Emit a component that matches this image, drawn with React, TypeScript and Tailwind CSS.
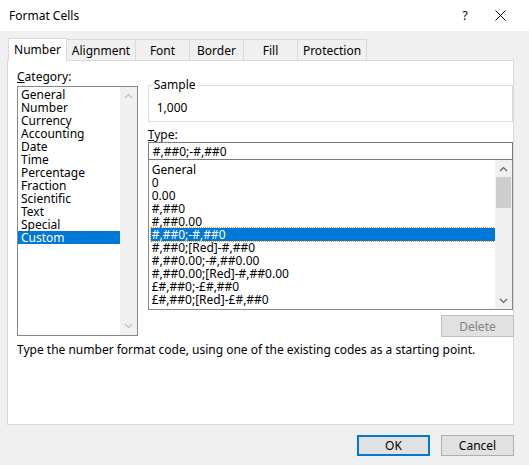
import React from "react";

const cats = ["General","Number","Currency","Accounting","Date","Time","Percentage","Fraction","Scientific","Text","Special","Custom"];
const types = ["General","0","0.00","#,##0","#,##0.00","#,##0;-#,##0","#,##0;[Red]-#,##0","#,##0.00;-#,##0.00","#,##0.00;[Red]-#,##0.00","£#,##0;-£#,##0","£#,##0;[Red]-£#,##0"];

const Up = ({c="#606060"}:{c?:string}) => (<svg width="9" height="6" viewBox="0 0 9 6"><path d="M1 5 L4.5 1.5 L8 5" fill="none" stroke={c} strokeWidth="1.2"/></svg>);
const Down = ({c="#606060"}:{c?:string}) => (<svg width="9" height="6" viewBox="0 0 9 6"><path d="M1 1 L4.5 4.5 L8 1" fill="none" stroke={c} strokeWidth="1.2"/></svg>);

export default function App() {
  const tabs = [["Alignment",69],["Font",54],["Border",54],["Fill",54],["Protection",69]] as const;
  return (
    <div className="w-[529px] h-[465px] bg-[#f0f0f0] text-[12px] leading-[13px] text-black flex flex-col overflow-hidden" style={{fontFamily:'"Noto Sans", "Open Sans", sans-serif'}}>
      <div className="h-[31px] bg-white flex items-center pl-[9px] shrink-0">
        <span className="text-[12px] flex-1">Format Cells</span>
        <span className="w-[20px] text-center mr-[20px]">?</span>
        <svg width="11" height="11" viewBox="0 0 11 11" className="mr-[23px]"><path d="M0.5 0.5 L10.5 10.5 M10.5 0.5 L0.5 10.5" stroke="#000" strokeWidth="1"/></svg>
      </div>
      <div className="flex items-end pl-[8px] h-[29px] shrink-0">
        <div className="w-[59px] h-[23px] bg-white border border-b-0 border-[#d9d9d9] flex items-center justify-center relative z-10 mb-[-1px] pb-[2px]">Number</div>
        {tabs.map(([t,w]) => (
          <div key={t} style={{width:w}} className="h-[21px] bg-[#f0f0f0] border border-b-0 border-l-0 border-[#d9d9d9] flex items-center justify-center">{t}</div>
        ))}
      </div>
      <div className="ml-[7px] w-[507px] h-[365px] bg-white border border-[#d9d9d9] flex flex-col pl-[9px] pt-[9px]">
        <div className="flex">
          <div className="w-[121px] flex flex-col">
            <div className="h-[16px]"><u>C</u>ategory:</div>
            <div className="h-[250px] border border-[#828790] flex">
              <div className="flex-1 flex flex-col pt-[1px]">
                {cats.map(c => (
                  <div key={c} className={"h-[13px] pl-[3px] " + (c==="Custom" ? "bg-[#0078d7] text-white" : "")}>{c}</div>
                ))}
              </div>
              <div className="w-[17px] bg-[#f0f0f0] flex flex-col justify-between items-center py-[6px]">
                <Up c="#c0c0c0"/><Down c="#c0c0c0"/>
              </div>
            </div>
          </div>
          <div className="ml-[10px] w-[366px] flex flex-col">
            <div className="h-[15px]"/>
            <div className="h-[37px] border border-[#dcdcdc] relative flex items-end pl-[8px] pb-[7px]">
              <span className="absolute left-[4px] top-[-8px] bg-white px-[1px]">Sample</span>
              <span>1,000</span>
            </div>
            <div className="h-[7px]"/>
            <div className="h-[11px] leading-[11px]"><u>T</u>ype:</div>
            <div className="h-[18px] mt-[2px] border border-[#7a7a7a] flex items-center pl-[4px]">#,##0;-#,##0</div>
            <div className="h-[150px] border border-[#828790] border-t-0 flex">
              <div className="flex-1 flex flex-col pt-[3px] pl-[2px]">
                {types.map((t,i) => (
                  <div key={i} className={"h-[13px] pl-[1px] " + (i===5 ? "bg-[#0078d7] text-white outline-1 outline-dotted outline-[#f0a030]" : "")}>{t}</div>
                ))}
              </div>
              <div className="w-[17px] bg-[#f0f0f0] flex flex-col items-center">
                <div className="h-[17px] flex items-center"><Up/></div>
                <div className="w-[15px] h-[31px] bg-[#cdcdcd]"/>
                <div className="flex-1"/>
                <div className="h-[17px] flex items-center"><Down/></div>
              </div>
            </div>
            <div className="flex justify-end mt-[5px]">
              <div className="w-[73px] h-[22px] mr-[-1px] bg-[#e1e1e1] border border-[#bfbfbf] text-[#838383] flex items-center justify-center">Delete</div>
            </div>
          </div>
        </div>
        <div className="mt-[6px]">Type the number format code, using one of the existing codes as a starting point.</div>
      </div>
      <div className="flex justify-end pr-[15px] mt-[10px] gap-[11px]">
        <div className="w-[73px] h-[21px] bg-[#e1e1e1] border-2 border-[#0078d7] flex items-center justify-center">OK</div>
        <div className="w-[73px] h-[21px] bg-[#e1e1e1] border border-[#adadad] flex items-center justify-center">Cancel</div>
      </div>
    </div>
  );
}
